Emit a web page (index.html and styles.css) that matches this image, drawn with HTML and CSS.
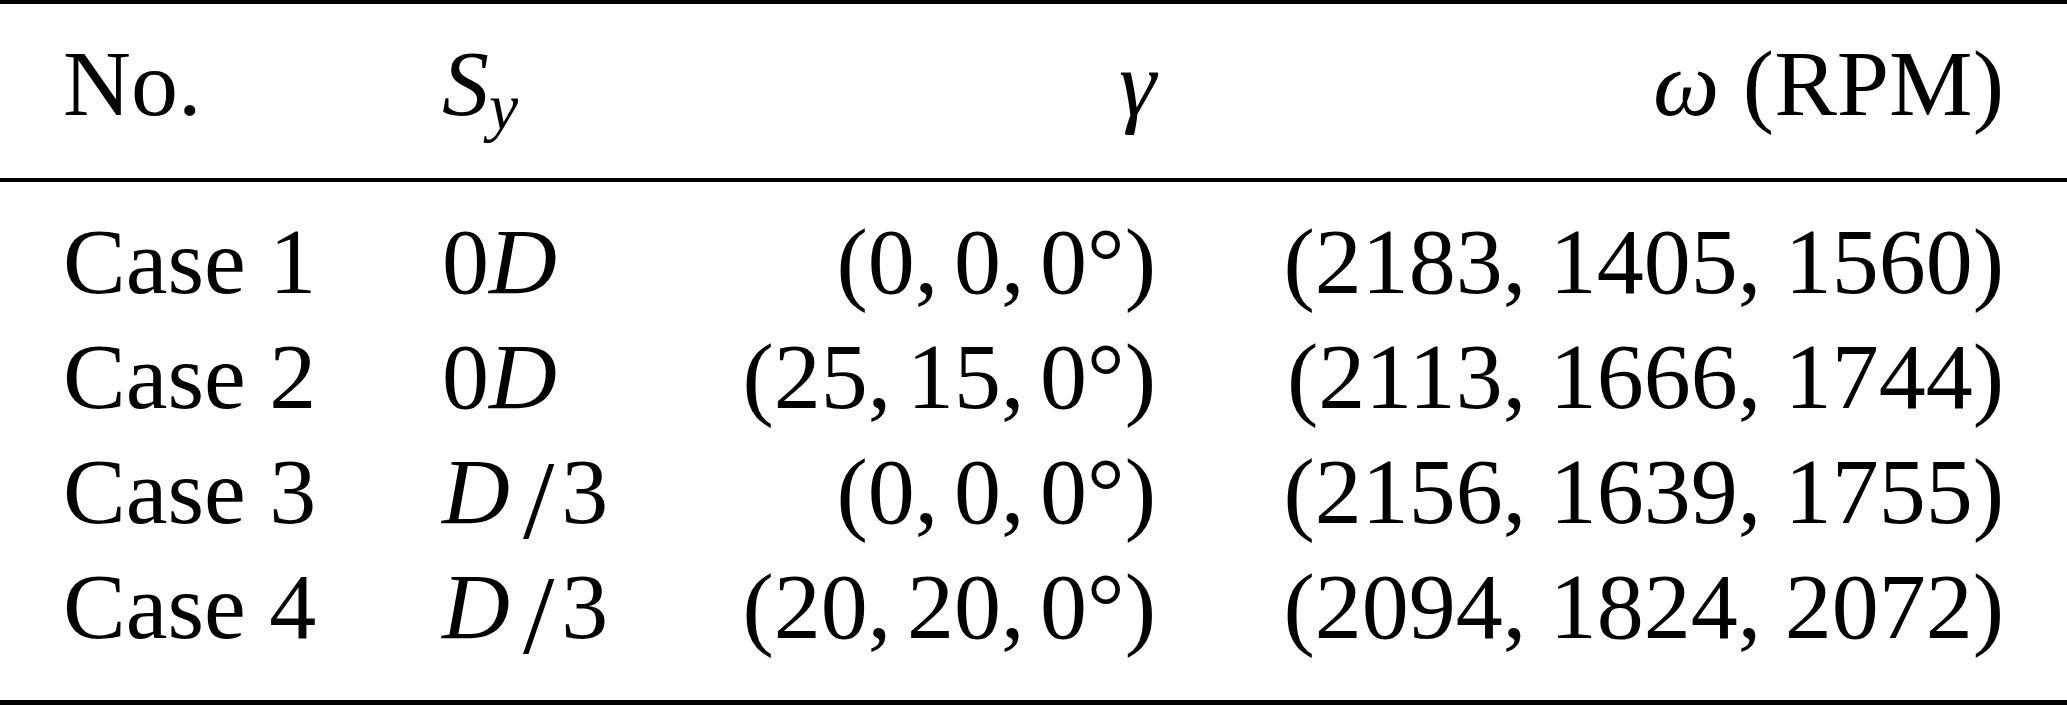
FILE: index.html
```html
<!DOCTYPE html>
<html lang="en">
<head>
<meta charset="utf-8">
<title>Cases</title>
<link rel="stylesheet" href="styles.css">
</head>
<body>
<table class="cases">
  <colgroup>
    <col class="c1">
    <col class="c2">
    <col class="c3">
    <col class="c4">
  </colgroup>
  <thead>
    <tr>
      <th class="l">No.</th>
      <th class="l"><i class="m">S</i><sub class="sub"><i class="m">y</i></sub></th>
      <th class="r"><i class="m">γ</i></th>
      <th class="r"><i class="m">ω</i> (RPM)</th>
    </tr>
  </thead>
  <tbody>
    <tr>
      <td class="l">Case 1</td>
      <td class="l">0<i class="m">D</i></td>
      <td class="r">(0<span class="mc">,</span>0<span class="mc">,</span>0°)</td>
      <td class="r">(2183, 1405, 1560)</td>
    </tr>
    <tr>
      <td class="l">Case 2</td>
      <td class="l">0<i class="m">D</i></td>
      <td class="r">(25<span class="mc">,</span>15<span class="mc">,</span>0°)</td>
      <td class="r">(2113, 1666, 1744)</td>
    </tr>
    <tr>
      <td class="l">Case 3</td>
      <td class="l"><i class="m dd">D</i><span class="sl">/</span>3</td>
      <td class="r">(0<span class="mc">,</span>0<span class="mc">,</span>0°)</td>
      <td class="r">(2156, 1639, 1755)</td>
    </tr>
    <tr>
      <td class="l">Case 4</td>
      <td class="l"><i class="m dd">D</i><span class="sl">/</span>3</td>
      <td class="r">(20<span class="mc">,</span>20<span class="mc">,</span>0°)</td>
      <td class="r">(2094, 1824, 2072)</td>
    </tr>
  </tbody>
</table>
</body>
</html>
```
FILE: styles.css
```css
html, body {
  margin: 0;
  padding: 0;
  background: #fff;
}

body {
  font-family: "Liberation Serif", "Times New Roman", serif;
  color: #000;
}

.cases {
  border-collapse: separate;
  border-spacing: 0;
  table-layout: fixed;
  width: 2067px;
  font-size: 94px;
  line-height: 115px;
}

.c1 { width: 379px; }
.c2 { width: 292px; }
.c3 { width: 548px; }
.c4 { width: 848px; }

.cases th,
.cases td {
  padding: 0 63px;
  font-weight: normal;
  white-space: nowrap;
  vertical-align: baseline;
}

.cases thead th {
  border-top: 4px solid #000;
  border-bottom: 4px solid #000;
  padding-top: 22px;
  padding-bottom: 37px;
}

.cases tbody tr:first-child td {
  padding-top: 22px;
}

.cases tbody tr:last-child td {
  padding-bottom: 36px;
  border-bottom: 5px solid #000;
}

.l { text-align: left; }
.r { text-align: right; }

.m { font-style: italic; }

.dd { margin-right: 0.14em; }

.sl {
  display: inline-block;
  font-size: 1.2em;
  line-height: 0;
  vertical-align: -0.13em;
  margin-right: 0.06em;
}

.sub {
  font-size: 0.7em;
  vertical-align: -14px;
  line-height: 0;
}

.mc { margin-right: 0.1667em; }
```
